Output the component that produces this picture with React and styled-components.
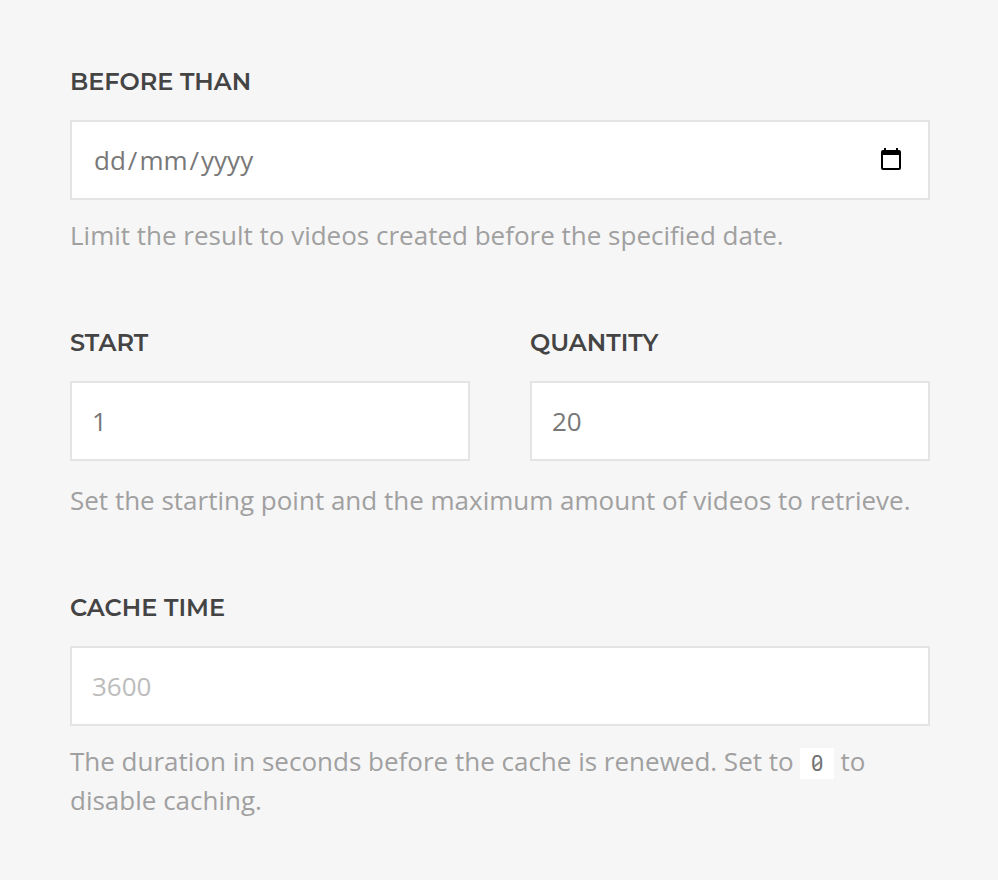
import React from 'react';
import styled, { createGlobalStyle } from 'styled-components';

const GlobalStyle = createGlobalStyle`
  * { box-sizing: border-box; }
  body { margin: 0; background: #f6f6f6; -webkit-font-smoothing: antialiased; }
`;
const Form = styled.main`
  min-height: 880px;
  padding: 64px 68px 0 70px;
  font-family: "Open Sans", sans-serif;
  font-size: 26px;
  color: #a0a0a0;
`;
const Section = styled.section`
  height: ${(p) => p.$height}px;
`;
const Fields = styled.div`
  display: grid;
  grid-template-columns: ${(p) => (p.$split ? '1fr 1fr' : '1fr')};
  column-gap: 60px;
`;
const Label = styled.label`
  display: block;
  height: 56px;
  font: 600 24px/36px Montserrat, "Open Sans", sans-serif;
  color: #444;
  white-space: nowrap;
`;
const InputBox = styled.div`
  display: flex;
  align-items: center;
  justify-content: space-between;
  height: 80px;
  padding: 0 27px 0 ${(p) => (p.$date ? 22 : 20)}px;
  background: #fff;
  border: 2px solid #e4e4e4;
  color: ${(p) => (p.$faint ? '#bcbcbc' : '#787878')};
`;
const Slash = styled.span`
  padding: 0 2px;
`;
const Help = styled.p`
  margin: ${(p) => p.$gap}px 0 0;
  line-height: 39px;
`;
const Code = styled.code`
  display: inline-flex;
  position: relative;
  justify-content: center;
  width: 33.4px;
  height: 31px;
  background: #fff;
  color: #707070;
  font: 22px/31px Roboto, sans-serif;
  &::after {
    content: "";
    position: absolute;
    left: 12.5px;
    top: 14.5px;
    width: 9px;
    height: 1.5px;
    background: #888;
    transform: rotate(-36deg);
  }
`;
const CalendarIcon = styled.svg`
  flex: none;
  margin-bottom: 2px;
`;

function Calendar() {
  return (
    <CalendarIcon width="20" height="22" viewBox="0 0 20 22" fill="none">
      <rect x="1" y="3" width="18" height="18" rx="1" stroke="#000" strokeWidth="2" />
      <path d="M1 3h18v4H1zM3 0h2v3H3zM15 0h2v3h-2z" fill="#000" />
    </CalendarIcon>
  );
}
function Field({ label, children, date, faint }) {
  return (
    <div>
      <Label>{label}</Label>
      <InputBox $date={date} $faint={faint}><span>{children}</span>{date && <Calendar />}</InputBox>
    </div>
  );
}
export default function App() {
  return (
    <>
      <GlobalStyle />
      <Form>
        <Section $height={261}>
          <Fields><Field label="BEFORE THAN" date>dd<Slash>/</Slash>mm<Slash>/</Slash>yyyy</Field></Fields>
          <Help $gap={16}>Limit the result to videos created before the specified date.</Help>
        </Section>
        <Section $height={265}>
          <Fields $split><Field label="START">1</Field><Field label="QUANTITY">20</Field></Fields>
          <Help $gap={20}>Set the starting point and the maximum amount of videos to retrieve.</Help>
        </Section>
        <Section $height={288}>
          <Fields><Field label="CACHE TIME" faint>3600</Field></Fields>
          <Help $gap={16}>The duration in seconds before the cache is renewed. Set to <Code>0</Code> to disable caching.</Help>
        </Section>
      </Form>
    </>
  );
}
